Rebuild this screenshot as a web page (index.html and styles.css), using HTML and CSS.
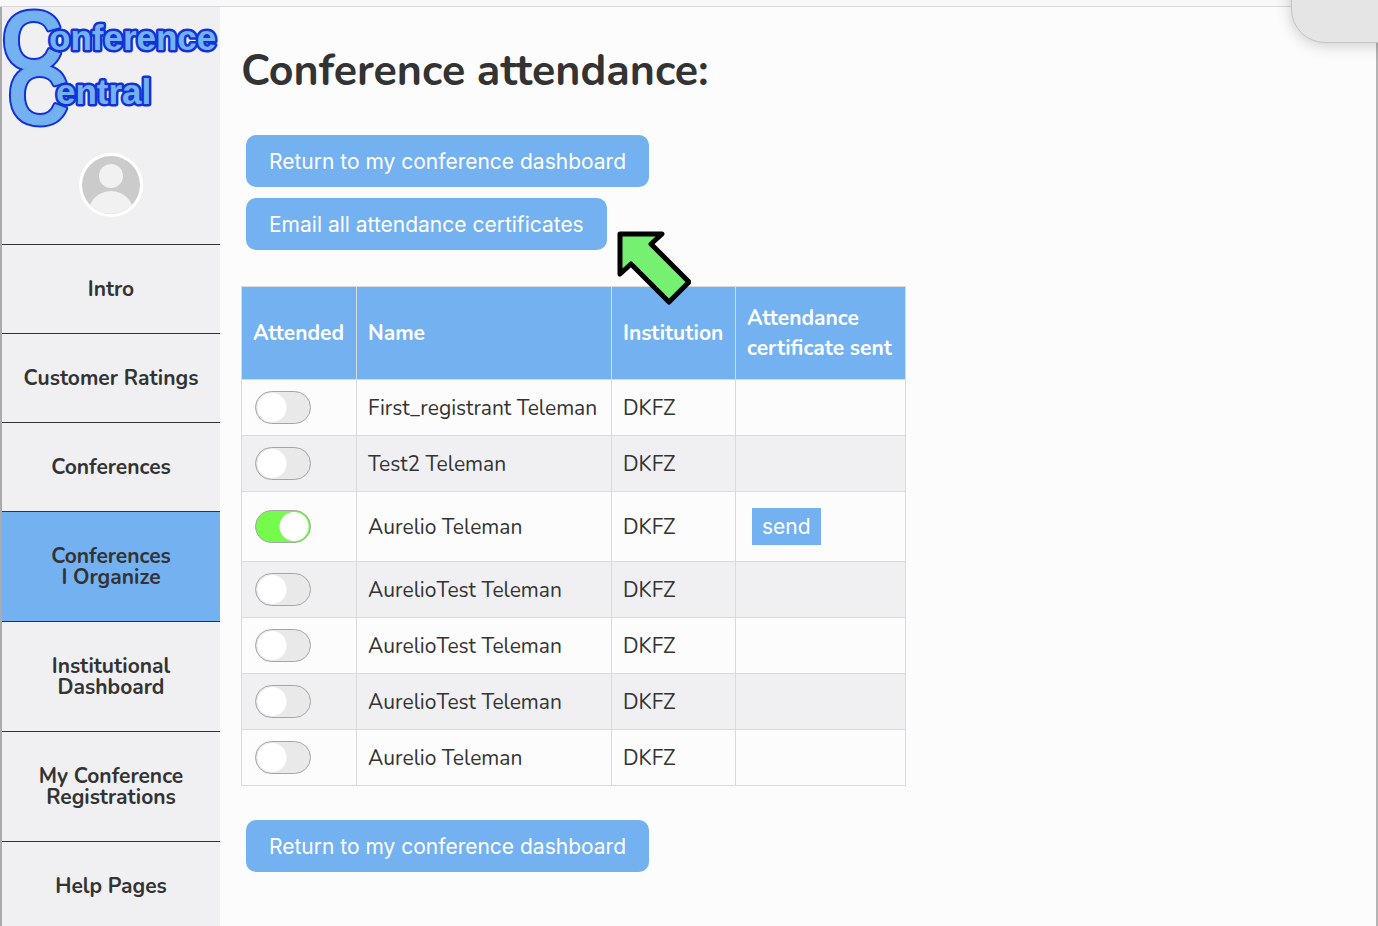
FILE: index.html
```html
<!DOCTYPE html>
<html lang="en">
<head>
<meta charset="utf-8">
<title>Conference attendance</title>
<link rel="stylesheet" href="styles.css">
</head>
<body>
<div class="topbar"></div>
<div class="corner-panel"></div>
<div class="layout">
  <aside class="sidebar">
    <svg class="logo" viewBox="0 0 218 122" role="img" aria-label="Conference Central">
      <defs>
        <g id="initials"><text x="0" y="62">C</text><text x="6" y="117">C</text></g>
      </defs>
      <use href="#initials" class="logo-big logo-outline"/>
      <use href="#initials" class="logo-big logo-fill"/>
      <g class="logo-small"><text x="47" y="43">onference</text><text x="54" y="97">entral</text></g>
    </svg>
    <svg class="avatar" viewBox="0 0 64 64" aria-hidden="true">
      <defs><clipPath id="face"><circle cx="32" cy="32" r="29"/></clipPath></defs>
      <circle cx="32" cy="32" r="32" fill="#fff"/>
      <g clip-path="url(#face)"><rect width="64" height="64" fill="#cbcbcb"/><circle cx="32" cy="23" r="12" fill="#f1f1f1"/><circle cx="32" cy="61" r="23" fill="#f1f1f1"/></g>
    </svg>
    <nav class="menu">
      <a class="menu-item" href="#">Intro</a>
      <a class="menu-item" href="#">Customer Ratings</a>
      <a class="menu-item" href="#">Conferences</a>
      <a class="menu-item active" href="#">Conferences<br>I Organize</a>
      <a class="menu-item" href="#">Institutional<br>Dashboard</a>
      <a class="menu-item" href="#">My Conference<br>Registrations</a>
      <a class="menu-item" href="#">Help Pages</a>
    </nav>
  </aside>
  <main class="content">
    <h1>Conference attendance:</h1>
    <div class="actions">
      <button class="btn" type="button">Return to my conference dashboard</button>
      <div class="pointed">
        <button class="btn" type="button">Email all attendance certificates</button>
        <svg class="arrow" viewBox="0 0 76 76" aria-hidden="true"><path d="M5 5H47L36 15L74 53L54 73L16 35L5 45Z" fill="#75f070" stroke="#000" stroke-width="5" stroke-linejoin="round"/></svg>
      </div>
    </div>
    <table class="attendance">
      <colgroup><col class="c-attended"><col class="c-name"><col class="c-inst"><col class="c-cert"></colgroup>
      <thead><tr><th>Attended</th><th>Name</th><th>Institution</th><th>Attendance<br>certificate sent</th></tr></thead>
      <tbody>
        <tr><td><input class="toggle" type="checkbox" aria-label="First_registrant Teleman attended"></td><td>First_registrant Teleman</td><td>DKFZ</td><td></td></tr>
        <tr><td><input class="toggle" type="checkbox" aria-label="Test2 Teleman attended"></td><td>Test2 Teleman</td><td>DKFZ</td><td></td></tr>
        <tr><td><input class="toggle" type="checkbox" checked aria-label="Aurelio Teleman attended"></td><td>Aurelio Teleman</td><td>DKFZ</td><td class="has-send"><button class="send" type="button">send</button></td></tr>
        <tr><td><input class="toggle" type="checkbox" aria-label="AurelioTest Teleman attended"></td><td>AurelioTest Teleman</td><td>DKFZ</td><td></td></tr>
        <tr><td><input class="toggle" type="checkbox" aria-label="AurelioTest Teleman attended"></td><td>AurelioTest Teleman</td><td>DKFZ</td><td></td></tr>
        <tr><td><input class="toggle" type="checkbox" aria-label="AurelioTest Teleman attended"></td><td>AurelioTest Teleman</td><td>DKFZ</td><td></td></tr>
        <tr><td><input class="toggle" type="checkbox" aria-label="Aurelio Teleman attended"></td><td>Aurelio Teleman</td><td>DKFZ</td><td></td></tr>
      </tbody>
    </table>
    <div class="actions">
      <button class="btn" type="button">Return to my conference dashboard</button>
    </div>
  </main>
</div>
</body>
</html>
```

FILE: styles.css
```css
* { box-sizing: border-box; }
html { height: 100%; }
body {
  display: flex;
  flex-direction: column;
  height: 100%;
  margin: 0;
  position: relative;
  overflow: hidden;
  background: #fcfcfc;
  color: #333;
  font: 21px/30px Nunito, Lato, sans-serif;
}
.topbar {
  flex: none;
  height: 7px;
  background: #f8f8fa;
  border-bottom: 1px solid #d8d8d8;
}
.corner-panel {
  position: absolute;
  top: -40px;
  right: -40px;
  width: 127px;
  height: 83px;
  background: #e5e5e5;
  border: 1px solid #c4c4c4;
  border-radius: 34px;
  box-shadow: 0 2px 16px rgba(0, 0, 0, .2);
}
.layout {
  flex: 1;
  min-height: 0;
  display: flex;
  border-left: 2px solid #ababad;
  border-right: 2px solid #b4b4b4;
}
.sidebar {
  flex: none;
  width: 218px;
  display: flex;
  flex-direction: column;
  align-items: center;
  background: #f0f0f3;
}
.logo {
  flex: none;
  display: block;
  width: 218px;
  height: 122px;
  overflow: visible;
  font-family: "Liberation Sans", Arial, sans-serif;
  font-weight: 700;
}
.logo-big { font-size: 83px; }
.logo-outline { fill: #1232d8; stroke: #1232d8; stroke-width: 5px; stroke-linejoin: round; }
.logo-fill { fill: #73b1f1; stroke: #73b1f1; stroke-width: 1px; }
.logo-small {
  font-size: 35px;
  fill: #73b1f1;
  stroke: #1232d8;
  stroke-width: 5px;
  stroke-linejoin: round;
  paint-order: stroke;
}
.avatar { flex: none; display: block; width: 64px; height: 64px; margin: 24px 0 27px; }
.menu { flex: none; width: 100%; }
.menu-item {
  display: block;
  padding: 34px 8px 33px;
  border-top: 1px solid #333;
  color: #333;
  font-weight: 700;
  line-height: 21px;
  text-align: center;
  text-decoration: none;
}
.menu-item.active { background: #73b1f1; }
.content { flex: 1; padding: 32px 21px; }
h1 { margin: 0 0 32px; font-size: 43px; line-height: 64px; }
.actions {
  display: flex;
  flex-direction: column;
  align-items: flex-start;
  gap: 11px;
  padding-left: 5px;
}
.btn, .send {
  border: 0;
  background: #73b1f1;
  color: #fff;
  font: 21px/26px Inter, sans-serif;
}
.btn { display: block; padding: 14px 23px 12px; border-radius: 10px; }
.pointed { position: relative; }
.arrow { position: absolute; left: 100%; top: 31px; width: 76px; height: 76px; margin-left: 8px; }
.attendance { margin: 36px 0 34px; border-collapse: collapse; table-layout: fixed; width: 664px; }
.c-attended { width: 115px; }
.c-name { width: 255px; }
.c-inst { width: 124px; }
.c-cert { width: 170px; }
th, td { padding: 0 11px; border: 1px solid #dadada; text-align: left; white-space: nowrap; }
th { height: 93px; background: #73b1f1; color: #fff; font-weight: 700; }
td { height: 56px; }
td.has-send { height: 70px; padding-left: 16px; }
tbody tr:nth-child(even) { background: #f0f0f3; }
.send { display: block; padding: 6px 10px 5px; }
.toggle {
  appearance: none;
  display: block;
  width: 56px;
  height: 33px;
  margin: 0 0 0 2px;
  border: 1px solid #a5a5a5;
  border-radius: 17px;
  background: radial-gradient(circle at 16px 50%, #fff 14px, transparent 15px) #e9e9e9;
}
.toggle:checked { background: radial-gradient(circle at 38px 50%, #fff 14px, transparent 15px) #75fb4c; }
```
